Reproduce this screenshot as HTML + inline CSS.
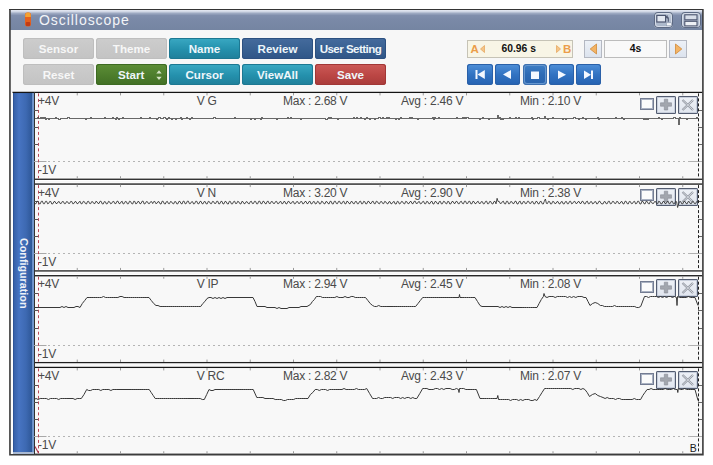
<!DOCTYPE html>
<html><head><meta charset="utf-8"><style>
*{margin:0;padding:0;box-sizing:border-box}
html,body{width:713px;height:465px;overflow:hidden;background:#fff;font-family:"Liberation Sans",sans-serif}
.abs{position:absolute;left:0;top:0}
.title{position:absolute;left:10px;top:10px;width:692.5px;height:19.5px;background:linear-gradient(#e6eaf3 0px,#d2d8e6 1.5px,#9ca8c1 3.5px,#808eac 5.5px,#7a89a7 10px,#7585a2 19.5px)}
.title span{position:absolute;left:29px;top:1.5px;font-size:14px;color:#f2f4f8;letter-spacing:0.95px}
.b{position:absolute;width:71px;height:21px;border-radius:3px;font-weight:bold;font-size:11.6px;text-align:center;line-height:21px;color:#eef6fa}
.gray{background:linear-gradient(#cdcdcd,#c3c3c3);color:#f7f7f7;box-shadow:inset 0 0 0 1px #bebebe}
.teal{background:linear-gradient(#3aa9c3,#2490ac 55%,#1f7f9a);box-shadow:inset 0 0 0 1px #1d7892}
.navy{background:linear-gradient(#456b9d,#386091 55%,#2f5587);box-shadow:inset 0 0 0 1px #2d5080}
.green{background:linear-gradient(#5d8e37,#4d7d2c 55%,#416f24);box-shadow:inset 0 0 0 1px #3d6a22}
.red{background:linear-gradient(#cc5a57,#bb4644 55%,#a93b3a);box-shadow:inset 0 0 0 1px #a13736}
.pb{position:absolute;top:63.5px;width:25.5px;height:21.3px;border-radius:3px;background:linear-gradient(#4f8fd8,#3273c2 50%,#2562b2);box-shadow:inset 0 0 0 1px #2a60a8}
.pb svg{position:absolute;left:0;top:0}
.abox{position:absolute;top:39.5px;width:18.5px;height:18px;background:linear-gradient(#edf1f7,#dce3ee);border:1px solid #b4b8c2}
.side{position:absolute;left:12.5px;top:92px;width:21px;height:361.5px;border-bottom:2px solid #a9b9d3;background:linear-gradient(90deg,#264a8a 0px,#3862aa 1.2px,#4774c2 6px,#3d69b2 13px,#2f5899 18.6px,#6a90c8 19.4px,#7a9cd0 21px);}
.side span{position:absolute;left:2px;top:146px;width:72px;font-weight:bold;font-size:10.75px;color:#eef2f8;transform-origin:0 0;transform:translate(15px,0) rotate(90deg);white-space:nowrap}
.lbl{position:absolute;font-size:12px;color:#4a4a4a;letter-spacing:-0.25px;white-space:nowrap;line-height:14px}
.chk{position:absolute;left:640.3px;width:13.3px;height:12px;border:1px solid #737c92;box-shadow:inset 0 0 0 1px #aab2c2;background:#fbfbfb}
.pbtn{position:absolute;width:20px;height:18px;border-radius:1.5px;background:linear-gradient(#eef1f7,#e0e5ee);box-shadow:inset 0 0 0 1px #535c70,inset 0 0 0 2px #c8cfdc}
.pbtn svg{position:absolute;left:0;top:0}
</style></head><body>
<div style="position:absolute;left:9px;top:9px;width:695px;height:447px;background:#f7f7f7"></div>
<div style="position:absolute;left:10.5px;top:92px;width:2.5px;height:362px;background:#fdfdfd"></div>
<div class="title"><span>Oscilloscope</span>
<svg style="position:absolute;left:14px;top:1px" width="8" height="17"><rect x="1" y="1.5" width="6" height="14" rx="2.2" fill="#e4601e"/><path d="M1.2 4.5Q1.2 1.5 4 1.5Q6.8 1.5 6.8 4.5V6H1.2Z" fill="#f3a233"/><rect x="1.8" y="11" width="4.4" height="4" rx="1" fill="#c03c16"/></svg>
<div style="position:absolute;left:643.5px;top:1.5px;width:19.5px;height:16px;border-radius:4px;background:linear-gradient(#c2ccdb,#a7b3c7);box-shadow:inset 0 0 0 1px #5d6a84,inset 0 0 0 2px #d6dce8"></div>
<svg style="position:absolute;left:643.5px;top:1.5px" width="20" height="16"><rect x="2.8" y="3.4" width="8.8" height="6.6" fill="#e2e7f0" stroke="#4d5670" stroke-width="1.2"/><path d="M14.3 9.8V6.3Q14.3 5 13 5H12.4M13.6 3.6L12.2 5L13.6 6.4" fill="none" stroke="#4d5670" stroke-width="1.1"/><rect x="12.3" y="10.8" width="5" height="3" fill="#f4f6fa" stroke="#8a96ab" stroke-width="0.6"/></svg>
<div style="position:absolute;left:670.5px;top:1.5px;width:20px;height:16px;border-radius:4px;background:linear-gradient(#c2ccdb,#a7b3c7);box-shadow:inset 0 0 0 1px #5d6a84,inset 0 0 0 2px #d6dce8"></div>
<svg style="position:absolute;left:670.5px;top:1.5px" width="20" height="16"><rect x="3.8" y="2.8" width="12.2" height="5" fill="#d8dee9" stroke="#4d5670" stroke-width="1.1"/><rect x="3.8" y="9.3" width="12.2" height="4.6" fill="#eef1f6" stroke="#4d5670" stroke-width="1.1"/></svg>
</div>
<div class="b gray" style="left:23px;top:38px">Sensor</div>
<div class="b gray" style="left:96px;top:38px">Theme</div>
<div class="b teal" style="left:169px;top:38px">Name</div>
<div class="b navy" style="left:242px;top:38px">Review</div>
<div class="b navy" style="left:315px;top:38px;letter-spacing:-0.55px">User Setting</div>
<div class="b gray" style="left:23px;top:63.5px">Reset</div>
<div class="b green" style="left:96px;top:63.5px"><span style="position:absolute;left:22px">Start</span><svg style="position:absolute;left:59px;top:5.5px" width="8" height="12"><path d="M1.3 4.6L4 1.2L6.7 4.6ZM1.3 7.7L4 11.1L6.7 7.7Z" fill="#d3e2c4"/></svg></div>
<div class="b teal" style="left:169px;top:63.5px">Cursor</div>
<div class="b teal" style="left:242px;top:63.5px">ViewAll</div>
<div class="b red" style="left:315px;top:63.5px">Save</div>

<div style="position:absolute;left:467px;top:39.5px;width:106px;height:18px;background:#f8f5e6;border:1px solid #c6c3b6"></div>
<svg style="position:absolute;left:467px;top:39.5px" width="106" height="18"><text x="3.5" y="13.2" font-family="Liberation Sans" font-weight="bold" font-size="11.5" fill="#eb9d4a">A</text><path d="M13.5 9L17.5 5.5V12.5Z" fill="#f5c488" stroke="#e4a258" stroke-width="0.7"/><path d="M89.5 5.5L93.5 9L89.5 12.5Z" fill="#f5c488" stroke="#e4a258" stroke-width="0.7"/><text x="96" y="13.2" font-family="Liberation Sans" font-weight="bold" font-size="11.5" fill="#eb9d4a">B</text></svg>
<div style="position:absolute;left:501.5px;top:43.2px;font-weight:bold;font-size:10.3px;color:#111;white-space:nowrap">60.96 s</div>
<div class="abox" style="left:583.5px"><svg width="18" height="18" style="position:absolute;left:-1px;top:-1px"><path d="M6.2 9L12.5 4V14Z" fill="#f3b466" stroke="#d08a3a" stroke-width="0.8"/></svg></div>
<div style="position:absolute;left:604px;top:39.5px;width:63px;height:18px;background:#f9f9f9;border:1px solid #bcbcbc;font-weight:bold;font-size:10.4px;text-align:center;line-height:15.5px;color:#111">4s</div>
<div class="abox" style="left:668.5px"><svg width="18" height="18" style="position:absolute;left:-1px;top:-1px"><path d="M6.5 4L12.8 9L6.5 14Z" fill="#f3b466" stroke="#d08a3a" stroke-width="0.8"/></svg></div>

<div class="pb" style="left:467px"><svg width="26" height="22"><rect x="8.5" y="6" width="2" height="9" fill="#f4f8ff"/><path d="M10.5 10.5L17.8 6V15Z" fill="#f4f8ff"/></svg></div>
<div class="pb" style="left:494.5px"><svg width="26" height="22"><path d="M8 10.5L16 6V15Z" fill="#f4f8ff"/></svg></div>
<div class="pb" style="left:522.5px;width:24.5px;border-radius:4px;background:linear-gradient(#3f7fc6,#2e6bb5 50%,#2862ac);box-shadow:inset 0 0 0 1px #3d6fae,inset 0 0 0 2px #6597d0"><svg width="26" height="22"><rect x="8" y="7.5" width="8" height="7.5" fill="#f4f8ff"/></svg></div>
<div class="pb" style="left:548.5px"><svg width="26" height="22"><path d="M9 6.5L17 10.75L9 15Z" fill="#f4f8ff"/></svg></div>
<div class="pb" style="left:576px;width:25px"><svg width="26" height="22"><path d="M8 6.5L15 10.75L8 15Z" fill="#f4f8ff"/><rect x="15" y="6.5" width="2" height="8.5" fill="#f4f8ff"/></svg></div>

<div class="side"><span>Configuration</span></div>
<svg class="abs" width="713" height="465">
<rect x="34" y="92.40" width="668.5" height="86.85" fill="#f8f8f8"/>
<rect x="34" y="184.07" width="668.5" height="86.85" fill="#f8f8f8"/>
<rect x="34" y="275.74" width="668.5" height="86.85" fill="#f8f8f8"/>
<rect x="34" y="367.41" width="668.5" height="86.85" fill="#f8f8f8"/>
<rect x="34" y="90.80" width="668.5" height="3.2" fill="#ffffff"/>
<rect x="34" y="177.65" width="668.5" height="3.2" fill="#ffffff"/>
<rect x="12.5" y="91.75" width="690.0" height="1.3" fill="#141414"/>
<rect x="34" y="178.60" width="668.5" height="1.3" fill="#1e1e1e"/>
<rect x="34" y="182.47" width="668.5" height="3.2" fill="#ffffff"/>
<rect x="34" y="269.32" width="668.5" height="3.2" fill="#ffffff"/>
<rect x="34" y="183.42" width="668.5" height="1.3" fill="#141414"/>
<rect x="34" y="270.27" width="668.5" height="1.3" fill="#1e1e1e"/>
<rect x="34" y="274.14" width="668.5" height="3.2" fill="#ffffff"/>
<rect x="34" y="360.99" width="668.5" height="3.2" fill="#ffffff"/>
<rect x="34" y="275.09" width="668.5" height="1.3" fill="#141414"/>
<rect x="34" y="361.94" width="668.5" height="1.3" fill="#1e1e1e"/>
<rect x="34" y="365.81" width="668.5" height="3.2" fill="#ffffff"/>
<rect x="34" y="452.66" width="668.5" height="3.2" fill="#ffffff"/>
<rect x="34" y="366.76" width="668.5" height="1.3" fill="#141414"/>
<rect x="34" y="453.61" width="668.5" height="1.3" fill="#1e1e1e"/>
</svg>

<div class="lbl" style="left:38px;top:94.10px">+4V</div>
<div class="lbl" style="left:38px;top:163.40px">-1V</div>
<div class="lbl" style="left:196.7px;top:93.90px">V G</div>
<div class="lbl" style="left:283px;top:93.90px">Max : 2.68 V</div>
<div class="lbl" style="left:401px;top:93.90px">Avg : 2.46 V</div>
<div class="lbl" style="left:520px;top:93.90px">Min : 2.10 V</div>
<div class="chk" style="top:97.60px"></div>
<div class="pbtn" style="left:656px;top:96.00px"><svg width="20" height="18"><path d="M8.3 3.2h3.4v3.6h3.8v3.4h-3.8v3.8h-3.4v-3.8h-3.8v-3.4h3.8z" fill="#a2a6ae" stroke="#888c96" stroke-width="0.6"/></svg></div>
<div class="pbtn" style="left:677.5px;top:96.00px"><svg width="20" height="18"><path d="M4.5 4L15 14M15 4L4.5 14" stroke="#8f949e" stroke-width="2.2"/><path d="M4.5 4L15 14M15 4L4.5 14" stroke="#e4e8ef" stroke-width="0.8"/></svg></div>

<div class="lbl" style="left:38px;top:185.77px">+4V</div>
<div class="lbl" style="left:38px;top:255.07px">-1V</div>
<div class="lbl" style="left:196.7px;top:185.57px">V N</div>
<div class="lbl" style="left:283px;top:185.57px">Max : 3.20 V</div>
<div class="lbl" style="left:401px;top:185.57px">Avg : 2.90 V</div>
<div class="lbl" style="left:520px;top:185.57px">Min : 2.38 V</div>
<div class="chk" style="top:189.27px"></div>
<div class="pbtn" style="left:656px;top:187.67px"><svg width="20" height="18"><path d="M8.3 3.2h3.4v3.6h3.8v3.4h-3.8v3.8h-3.4v-3.8h-3.8v-3.4h3.8z" fill="#a2a6ae" stroke="#888c96" stroke-width="0.6"/></svg></div>
<div class="pbtn" style="left:677.5px;top:187.67px"><svg width="20" height="18"><path d="M4.5 4L15 14M15 4L4.5 14" stroke="#8f949e" stroke-width="2.2"/><path d="M4.5 4L15 14M15 4L4.5 14" stroke="#e4e8ef" stroke-width="0.8"/></svg></div>

<div class="lbl" style="left:38px;top:277.44px">+4V</div>
<div class="lbl" style="left:38px;top:346.74px">-1V</div>
<div class="lbl" style="left:196.7px;top:277.24px">V IP</div>
<div class="lbl" style="left:283px;top:277.24px">Max : 2.94 V</div>
<div class="lbl" style="left:401px;top:277.24px">Avg : 2.45 V</div>
<div class="lbl" style="left:520px;top:277.24px">Min : 2.08 V</div>
<div class="chk" style="top:280.94px"></div>
<div class="pbtn" style="left:656px;top:279.34px"><svg width="20" height="18"><path d="M8.3 3.2h3.4v3.6h3.8v3.4h-3.8v3.8h-3.4v-3.8h-3.8v-3.4h3.8z" fill="#a2a6ae" stroke="#888c96" stroke-width="0.6"/></svg></div>
<div class="pbtn" style="left:677.5px;top:279.34px"><svg width="20" height="18"><path d="M4.5 4L15 14M15 4L4.5 14" stroke="#8f949e" stroke-width="2.2"/><path d="M4.5 4L15 14M15 4L4.5 14" stroke="#e4e8ef" stroke-width="0.8"/></svg></div>

<div class="lbl" style="left:38px;top:369.11px">+4V</div>
<div class="lbl" style="left:38px;top:438.41px">-1V</div>
<div class="lbl" style="left:196.7px;top:368.91px">V RC</div>
<div class="lbl" style="left:283px;top:368.91px">Max : 2.82 V</div>
<div class="lbl" style="left:401px;top:368.91px">Avg : 2.43 V</div>
<div class="lbl" style="left:520px;top:368.91px">Min : 2.07 V</div>
<div class="chk" style="top:372.61px"></div>
<div class="pbtn" style="left:656px;top:371.01px"><svg width="20" height="18"><path d="M8.3 3.2h3.4v3.6h3.8v3.4h-3.8v3.8h-3.4v-3.8h-3.8v-3.4h3.8z" fill="#a2a6ae" stroke="#888c96" stroke-width="0.6"/></svg></div>
<div class="pbtn" style="left:677.5px;top:371.01px"><svg width="20" height="18"><path d="M4.5 4L15 14M15 4L4.5 14" stroke="#8f949e" stroke-width="2.2"/><path d="M4.5 4L15 14M15 4L4.5 14" stroke="#e4e8ef" stroke-width="0.8"/></svg></div>

<svg class="abs" width="713" height="465">
<line x1="34.5" y1="92" x2="34.5" y2="454.5" stroke="#303030"/>
<line x1="77.25" y1="93.00" x2="77.25" y2="95.40" stroke="#9a9a9a"/>
<line x1="77.25" y1="176.25" x2="77.25" y2="178.65" stroke="#9a9a9a"/>
<line x1="120.50" y1="93.00" x2="120.50" y2="95.40" stroke="#9a9a9a"/>
<line x1="120.50" y1="176.25" x2="120.50" y2="178.65" stroke="#9a9a9a"/>
<line x1="163.75" y1="93.00" x2="163.75" y2="95.40" stroke="#9a9a9a"/>
<line x1="163.75" y1="176.25" x2="163.75" y2="178.65" stroke="#9a9a9a"/>
<line x1="207.00" y1="93.00" x2="207.00" y2="95.40" stroke="#9a9a9a"/>
<line x1="207.00" y1="176.25" x2="207.00" y2="178.65" stroke="#9a9a9a"/>
<line x1="250.25" y1="93.00" x2="250.25" y2="95.40" stroke="#9a9a9a"/>
<line x1="250.25" y1="176.25" x2="250.25" y2="178.65" stroke="#9a9a9a"/>
<line x1="293.50" y1="93.00" x2="293.50" y2="95.40" stroke="#9a9a9a"/>
<line x1="293.50" y1="176.25" x2="293.50" y2="178.65" stroke="#9a9a9a"/>
<line x1="336.75" y1="93.00" x2="336.75" y2="95.40" stroke="#9a9a9a"/>
<line x1="336.75" y1="176.25" x2="336.75" y2="178.65" stroke="#9a9a9a"/>
<line x1="380.00" y1="93.00" x2="380.00" y2="95.40" stroke="#9a9a9a"/>
<line x1="380.00" y1="176.25" x2="380.00" y2="178.65" stroke="#9a9a9a"/>
<line x1="423.25" y1="93.00" x2="423.25" y2="95.40" stroke="#9a9a9a"/>
<line x1="423.25" y1="176.25" x2="423.25" y2="178.65" stroke="#9a9a9a"/>
<line x1="466.50" y1="93.00" x2="466.50" y2="95.40" stroke="#9a9a9a"/>
<line x1="466.50" y1="176.25" x2="466.50" y2="178.65" stroke="#9a9a9a"/>
<line x1="509.75" y1="93.00" x2="509.75" y2="95.40" stroke="#9a9a9a"/>
<line x1="509.75" y1="176.25" x2="509.75" y2="178.65" stroke="#9a9a9a"/>
<line x1="553.00" y1="93.00" x2="553.00" y2="95.40" stroke="#9a9a9a"/>
<line x1="553.00" y1="176.25" x2="553.00" y2="178.65" stroke="#9a9a9a"/>
<line x1="596.25" y1="93.00" x2="596.25" y2="95.40" stroke="#9a9a9a"/>
<line x1="596.25" y1="176.25" x2="596.25" y2="178.65" stroke="#9a9a9a"/>
<line x1="639.50" y1="93.00" x2="639.50" y2="95.40" stroke="#9a9a9a"/>
<line x1="639.50" y1="176.25" x2="639.50" y2="178.65" stroke="#9a9a9a"/>
<line x1="682.75" y1="93.00" x2="682.75" y2="95.40" stroke="#9a9a9a"/>
<line x1="682.75" y1="176.25" x2="682.75" y2="178.65" stroke="#9a9a9a"/>
<line x1="34" y1="110.5" x2="38.5" y2="110.5" stroke="#555"/>
<line x1="698" y1="110.5" x2="702" y2="110.5" stroke="#666"/>
<line x1="34" y1="127.5" x2="38.5" y2="127.5" stroke="#555"/>
<line x1="698" y1="127.5" x2="702" y2="127.5" stroke="#666"/>
<line x1="34" y1="144.5" x2="38.5" y2="144.5" stroke="#555"/>
<line x1="698" y1="144.5" x2="702" y2="144.5" stroke="#666"/>
<line x1="34" y1="161.5" x2="46.5" y2="161.5" stroke="#a8a8a8"/>
<line x1="48" y1="161.5" x2="690" y2="161.5" stroke="#b4b4b4" stroke-dasharray="2,3"/>
<line x1="690" y1="161.5" x2="702" y2="161.5" stroke="#b0b0b0"/>
<line x1="38.5" y1="93.4" x2="38.5" y2="178.2" stroke="#b8485a" stroke-dasharray="3,2.5"/>
<line x1="698.5" y1="93.4" x2="698.5" y2="178.2" stroke="#222" stroke-dasharray="3,2"/>
<path d="M34.0,118.5 L35.0,118.5 L35.0,118.5 L36.0,118.5 L36.0,118.5 L37.0,118.5 L37.0,117.5 L38.0,117.5 L38.0,118.5 L39.0,118.5 L39.0,118.5 L40.0,118.5 L40.0,117.5 L41.0,117.5 L41.0,118.5 L42.0,118.5 L42.0,117.5 L43.0,117.5 L43.0,118.5 L44.0,118.5 L44.0,117.5 L45.0,117.5 L45.0,119.5 L46.0,119.5 L46.0,118.5 L47.0,118.5 L47.0,118.5 L48.0,118.5 L48.0,119.5 L49.0,119.5 L49.0,118.5 L50.0,118.5 L50.0,118.5 L51.0,118.5 L51.0,118.5 L52.0,118.5 L52.0,118.5 L53.0,118.5 L53.0,118.5 L54.0,118.5 L54.0,118.5 L55.0,118.5 L55.0,117.5 L56.0,117.5 L56.0,118.5 L57.0,118.5 L57.0,118.5 L58.0,118.5 L58.0,119.5 L59.0,119.5 L59.0,119.5 L60.0,119.5 L60.0,118.5 L61.0,118.5 L61.0,118.5 L62.0,118.5 L62.0,118.5 L63.0,118.5 L63.0,118.5 L64.0,118.5 L64.0,118.5 L65.0,118.5 L65.0,118.5 L66.0,118.5 L66.0,118.5 L67.0,118.5 L67.0,117.5 L68.0,117.5 L68.0,117.5 L69.0,117.5 L69.0,118.5 L70.0,118.5 L70.0,118.5 L71.0,118.5 L71.0,118.5 L72.0,118.5 L72.0,118.5 L73.0,118.5 L73.0,118.5 L74.0,118.5 L74.0,118.5 L75.0,118.5 L75.0,118.5 L76.0,118.5 L76.0,118.5 L77.0,118.5 L77.0,118.5 L78.0,118.5 L78.0,118.5 L79.0,118.5 L79.0,118.5 L80.0,118.5 L80.0,118.5 L81.0,118.5 L81.0,118.5 L82.0,118.5 L82.0,118.5 L83.0,118.5 L83.0,118.5 L84.0,118.5 L84.0,118.5 L85.0,118.5 L85.0,119.5 L86.0,119.5 L86.0,118.5 L87.0,118.5 L87.0,118.5 L88.0,118.5 L88.0,118.5 L89.0,118.5 L89.0,118.5 L90.0,118.5 L90.0,117.5 L91.0,117.5 L91.0,118.5 L92.0,118.5 L92.0,118.5 L93.0,118.5 L93.0,118.5 L94.0,118.5 L94.0,118.5 L95.0,118.5 L95.0,118.5 L96.0,118.5 L96.0,118.5 L97.0,118.5 L97.0,118.5 L98.0,118.5 L98.0,118.5 L99.0,118.5 L99.0,118.5 L100.0,118.5 L100.0,118.5 L101.0,118.5 L101.0,118.5 L102.0,118.5 L102.0,118.5 L103.0,118.5 L103.0,118.5 L104.0,118.5 L104.0,117.5 L105.0,117.5 L105.0,118.5 L106.0,118.5 L106.0,118.5 L107.0,118.5 L107.0,118.5 L108.0,118.5 L108.0,118.5 L109.0,118.5 L109.0,118.5 L110.0,118.5 L110.0,118.5 L111.0,118.5 L111.0,118.5 L112.0,118.5 L112.0,117.5 L113.0,117.5 L113.0,118.5 L114.0,118.5 L114.0,118.5 L115.0,118.5 L115.0,119.5 L116.0,119.5 L116.0,117.5 L117.0,117.5 L117.0,118.5 L118.0,118.5 L118.0,119.5 L119.0,119.5 L119.0,118.5 L120.0,118.5 L120.0,118.5 L121.0,118.5 L121.0,118.5 L122.0,118.5 L122.0,117.5 L123.0,117.5 L123.0,118.5 L124.0,118.5 L124.0,118.5 L125.0,118.5 L125.0,118.5 L126.0,118.5 L126.0,118.5 L127.0,118.5 L127.0,118.5 L128.0,118.5 L128.0,118.5 L129.0,118.5 L129.0,118.5 L130.0,118.5 L130.0,118.5 L131.0,118.5 L131.0,118.5 L132.0,118.5 L132.0,118.5 L133.0,118.5 L133.0,118.5 L134.0,118.5 L134.0,118.5 L135.0,118.5 L135.0,118.5 L136.0,118.5 L136.0,118.5 L137.0,118.5 L137.0,118.5 L138.0,118.5 L138.0,118.5 L139.0,118.5 L139.0,118.5 L140.0,118.5 L140.0,117.5 L141.0,117.5 L141.0,118.5 L142.0,118.5 L142.0,118.5 L143.0,118.5 L143.0,118.5 L144.0,118.5 L144.0,118.5 L145.0,118.5 L145.0,118.5 L146.0,118.5 L146.0,118.5 L147.0,118.5 L147.0,118.5 L148.0,118.5 L148.0,118.5 L149.0,118.5 L149.0,117.5 L150.0,117.5 L150.0,118.5 L151.0,118.5 L151.0,118.5 L152.0,118.5 L152.0,118.5 L153.0,118.5 L153.0,118.5 L154.0,118.5 L154.0,118.5 L155.0,118.5 L155.0,118.5 L156.0,118.5 L156.0,119.5 L157.0,119.5 L157.0,118.5 L158.0,118.5 L158.0,117.5 L159.0,117.5 L159.0,117.5 L160.0,117.5 L160.0,118.5 L161.0,118.5 L161.0,118.5 L162.0,118.5 L162.0,118.5 L163.0,118.5 L163.0,117.5 L164.0,117.5 L164.0,117.5 L165.0,117.5 L165.0,118.5 L166.0,118.5 L166.0,119.5 L167.0,119.5 L167.0,118.5 L168.0,118.5 L168.0,117.5 L169.0,117.5 L169.0,118.5 L170.0,118.5 L170.0,118.5 L171.0,118.5 L171.0,119.5 L172.0,119.5 L172.0,118.5 L173.0,118.5 L173.0,118.5 L174.0,118.5 L174.0,118.5 L175.0,118.5 L175.0,119.5 L176.0,119.5 L176.0,118.5 L177.0,118.5 L177.0,118.5 L178.0,118.5 L178.0,118.5 L179.0,118.5 L179.0,118.5 L180.0,118.5 L180.0,117.5 L181.0,117.5 L181.0,119.5 L182.0,119.5 L182.0,118.5 L183.0,118.5 L183.0,118.5 L184.0,118.5 L184.0,118.5 L185.0,118.5 L185.0,118.5 L186.0,118.5 L186.0,117.5 L187.0,117.5 L187.0,118.5 L188.0,118.5 L188.0,118.5 L189.0,118.5 L189.0,119.5 L190.0,119.5 L190.0,118.5 L191.0,118.5 L191.0,117.5 L192.0,117.5 L192.0,118.5 L193.0,118.5 L193.0,118.5 L194.0,118.5 L194.0,118.5 L195.0,118.5 L195.0,118.5 L196.0,118.5 L196.0,118.5 L197.0,118.5 L197.0,118.5 L198.0,118.5 L198.0,118.5 L199.0,118.5 L199.0,118.5 L200.0,118.5 L200.0,118.5 L201.0,118.5 L201.0,118.5 L202.0,118.5 L202.0,118.5 L203.0,118.5 L203.0,118.5 L204.0,118.5 L204.0,118.5 L205.0,118.5 L205.0,118.5 L206.0,118.5 L206.0,118.5 L207.0,118.5 L207.0,118.5 L208.0,118.5 L208.0,118.5 L209.0,118.5 L209.0,118.5 L210.0,118.5 L210.0,118.5 L211.0,118.5 L211.0,118.5 L212.0,118.5 L212.0,118.5 L213.0,118.5 L213.0,117.5 L214.0,117.5 L214.0,117.5 L215.0,117.5 L215.0,118.5 L216.0,118.5 L216.0,118.5 L217.0,118.5 L217.0,118.5 L218.0,118.5 L218.0,118.5 L219.0,118.5 L219.0,118.5 L220.0,118.5 L220.0,118.5 L221.0,118.5 L221.0,118.5 L222.0,118.5 L222.0,118.5 L223.0,118.5 L223.0,118.5 L224.0,118.5 L224.0,118.5 L225.0,118.5 L225.0,118.5 L226.0,118.5 L226.0,118.5 L227.0,118.5 L227.0,118.5 L228.0,118.5 L228.0,118.5 L229.0,118.5 L229.0,118.5 L230.0,118.5 L230.0,118.5 L231.0,118.5 L231.0,118.5 L232.0,118.5 L232.0,118.5 L233.0,118.5 L233.0,118.5 L234.0,118.5 L234.0,117.5 L235.0,117.5 L235.0,118.5 L236.0,118.5 L236.0,118.5 L237.0,118.5 L237.0,118.5 L238.0,118.5 L238.0,118.5 L239.0,118.5 L239.0,118.5 L240.0,118.5 L240.0,118.5 L241.0,118.5 L241.0,118.5 L242.0,118.5 L242.0,118.5 L243.0,118.5 L243.0,118.5 L244.0,118.5 L244.0,118.5 L245.0,118.5 L245.0,118.5 L246.0,118.5 L246.0,118.5 L247.0,118.5 L247.0,118.5 L248.0,118.5 L248.0,118.5 L249.0,118.5 L249.0,118.5 L250.0,118.5 L250.0,119.5 L251.0,119.5 L251.0,118.5 L252.0,118.5 L252.0,118.5 L253.0,118.5 L253.0,118.5 L254.0,118.5 L254.0,119.5 L255.0,119.5 L255.0,118.5 L256.0,118.5 L256.0,118.5 L257.0,118.5 L257.0,118.5 L258.0,118.5 L258.0,118.5 L259.0,118.5 L259.0,118.5 L260.0,118.5 L260.0,119.5 L261.0,119.5 L261.0,117.5 L262.0,117.5 L262.0,118.5 L263.0,118.5 L263.0,118.5 L264.0,118.5 L264.0,118.5 L265.0,118.5 L265.0,118.5 L266.0,118.5 L266.0,118.5 L267.0,118.5 L267.0,118.5 L268.0,118.5 L268.0,118.5 L269.0,118.5 L269.0,118.5 L270.0,118.5 L270.0,118.5 L271.0,118.5 L271.0,118.5 L272.0,118.5 L272.0,118.5 L273.0,118.5 L273.0,118.5 L274.0,118.5 L274.0,118.5 L275.0,118.5 L275.0,118.5 L276.0,118.5 L276.0,119.5 L277.0,119.5 L277.0,118.5 L278.0,118.5 L278.0,118.5 L279.0,118.5 L279.0,118.5 L280.0,118.5 L280.0,118.5 L281.0,118.5 L281.0,118.5 L282.0,118.5 L282.0,118.5 L283.0,118.5 L283.0,118.5 L284.0,118.5 L284.0,118.5 L285.0,118.5 L285.0,118.5 L286.0,118.5 L286.0,118.5 L287.0,118.5 L287.0,117.5 L288.0,117.5 L288.0,118.5 L289.0,118.5 L289.0,118.5 L290.0,118.5 L290.0,117.5 L291.0,117.5 L291.0,118.5 L292.0,118.5 L292.0,118.5 L293.0,118.5 L293.0,118.5 L294.0,118.5 L294.0,118.5 L295.0,118.5 L295.0,118.5 L296.0,118.5 L296.0,118.5 L297.0,118.5 L297.0,118.5 L298.0,118.5 L298.0,118.5 L299.0,118.5 L299.0,118.5 L300.0,118.5 L300.0,119.5 L301.0,119.5 L301.0,118.5 L302.0,118.5 L302.0,118.5 L303.0,118.5 L303.0,118.5 L304.0,118.5 L304.0,118.5 L305.0,118.5 L305.0,118.5 L306.0,118.5 L306.0,118.5 L307.0,118.5 L307.0,118.5 L308.0,118.5 L308.0,118.5 L309.0,118.5 L309.0,118.5 L310.0,118.5 L310.0,118.5 L311.0,118.5 L311.0,118.5 L312.0,118.5 L312.0,118.5 L313.0,118.5 L313.0,118.5 L314.0,118.5 L314.0,118.5 L315.0,118.5 L315.0,118.5 L316.0,118.5 L316.0,118.5 L317.0,118.5 L317.0,118.5 L318.0,118.5 L318.0,118.5 L319.0,118.5 L319.0,118.5 L320.0,118.5 L320.0,118.5 L321.0,118.5 L321.0,118.5 L322.0,118.5 L322.0,118.5 L323.0,118.5 L323.0,118.5 L324.0,118.5 L324.0,118.5 L325.0,118.5 L325.0,119.5 L326.0,119.5 L326.0,119.5 L327.0,119.5 L327.0,118.5 L328.0,118.5 L328.0,117.5 L329.0,117.5 L329.0,118.5 L330.0,118.5 L330.0,117.5 L331.0,117.5 L331.0,118.5 L332.0,118.5 L332.0,118.5 L333.0,118.5 L333.0,118.5 L334.0,118.5 L334.0,118.5 L335.0,118.5 L335.0,118.5 L336.0,118.5 L336.0,118.5 L337.0,118.5 L337.0,119.5 L338.0,119.5 L338.0,118.5 L339.0,118.5 L339.0,118.5 L340.0,118.5 L340.0,118.5 L341.0,118.5 L341.0,118.5 L342.0,118.5 L342.0,118.5 L343.0,118.5 L343.0,118.5 L344.0,118.5 L344.0,118.5 L345.0,118.5 L345.0,118.5 L346.0,118.5 L346.0,118.5 L347.0,118.5 L347.0,118.5 L348.0,118.5 L348.0,118.5 L349.0,118.5 L349.0,118.5 L350.0,118.5 L350.0,118.5 L351.0,118.5 L351.0,118.5 L352.0,118.5 L352.0,118.5 L353.0,118.5 L353.0,117.5 L354.0,117.5 L354.0,118.5 L355.0,118.5 L355.0,118.5 L356.0,118.5 L356.0,117.5 L357.0,117.5 L357.0,118.5 L358.0,118.5 L358.0,118.5 L359.0,118.5 L359.0,118.5 L360.0,118.5 L360.0,117.5 L361.0,117.5 L361.0,118.5 L362.0,118.5 L362.0,118.5 L363.0,118.5 L363.0,118.5 L364.0,118.5 L364.0,119.5 L365.0,119.5 L365.0,118.5 L366.0,118.5 L366.0,117.5 L367.0,117.5 L367.0,118.5 L368.0,118.5 L368.0,118.5 L369.0,118.5 L369.0,119.5 L370.0,119.5 L370.0,118.5 L371.0,118.5 L371.0,118.5 L372.0,118.5 L372.0,118.5 L373.0,118.5 L373.0,118.5 L374.0,118.5 L374.0,119.5 L375.0,119.5 L375.0,118.5 L376.0,118.5 L376.0,118.5 L377.0,118.5 L377.0,118.5 L378.0,118.5 L378.0,117.5 L379.0,117.5 L379.0,117.5 L380.0,117.5 L380.0,118.5 L381.0,118.5 L381.0,118.5 L382.0,118.5 L382.0,117.5 L383.0,117.5 L383.0,118.5 L384.0,118.5 L384.0,118.5 L385.0,118.5 L385.0,118.5 L386.0,118.5 L386.0,117.5 L387.0,117.5 L387.0,118.5 L388.0,118.5 L388.0,117.5 L389.0,117.5 L389.0,118.5 L390.0,118.5 L390.0,118.5 L391.0,118.5 L391.0,118.5 L392.0,118.5 L392.0,118.5 L393.0,118.5 L393.0,118.5 L394.0,118.5 L394.0,118.5 L395.0,118.5 L395.0,119.5 L396.0,119.5 L396.0,118.5 L397.0,118.5 L397.0,118.5 L398.0,118.5 L398.0,119.5 L399.0,119.5 L399.0,118.5 L400.0,118.5 L400.0,117.5 L401.0,117.5 L401.0,118.5 L402.0,118.5 L402.0,118.5 L403.0,118.5 L403.0,118.5 L404.0,118.5 L404.0,118.5 L405.0,118.5 L405.0,118.5 L406.0,118.5 L406.0,118.5 L407.0,118.5 L407.0,118.5 L408.0,118.5 L408.0,118.5 L409.0,118.5 L409.0,117.5 L410.0,117.5 L410.0,118.5 L411.0,118.5 L411.0,117.5 L412.0,117.5 L412.0,118.5 L413.0,118.5 L413.0,118.5 L414.0,118.5 L414.0,118.5 L415.0,118.5 L415.0,118.5 L416.0,118.5 L416.0,118.5 L417.0,118.5 L417.0,119.5 L418.0,119.5 L418.0,118.5 L419.0,118.5 L419.0,118.5 L420.0,118.5 L420.0,118.5 L421.0,118.5 L421.0,118.5 L422.0,118.5 L422.0,118.5 L423.0,118.5 L423.0,118.5 L424.0,118.5 L424.0,118.5 L425.0,118.5 L425.0,118.5 L426.0,118.5 L426.0,118.5 L427.0,118.5 L427.0,118.5 L428.0,118.5 L428.0,118.5 L429.0,118.5 L429.0,118.5 L430.0,118.5 L430.0,118.5 L431.0,118.5 L431.0,118.5 L432.0,118.5 L432.0,117.5 L433.0,117.5 L433.0,119.5 L434.0,119.5 L434.0,117.5 L435.0,117.5 L435.0,118.5 L436.0,118.5 L436.0,118.5 L437.0,118.5 L437.0,118.5 L438.0,118.5 L438.0,117.5 L439.0,117.5 L439.0,118.5 L440.0,118.5 L440.0,118.5 L441.0,118.5 L441.0,118.5 L442.0,118.5 L442.0,118.5 L443.0,118.5 L443.0,118.5 L444.0,118.5 L444.0,118.5 L445.0,118.5 L445.0,118.5 L446.0,118.5 L446.0,118.5 L447.0,118.5 L447.0,118.5 L448.0,118.5 L448.0,118.5 L449.0,118.5 L449.0,118.5 L450.0,118.5 L450.0,118.5 L451.0,118.5 L451.0,118.5 L452.0,118.5 L452.0,118.5 L453.0,118.5 L453.0,118.5 L454.0,118.5 L454.0,118.5 L455.0,118.5 L455.0,118.5 L456.0,118.5 L456.0,117.5 L457.0,117.5 L457.0,118.5 L458.0,118.5 L458.0,118.5 L459.0,118.5 L459.0,118.5 L460.0,118.5 L460.0,118.5 L461.0,118.5 L461.0,118.5 L462.0,118.5 L462.0,117.5 L463.0,117.5 L463.0,118.5 L464.0,118.5 L464.0,117.5 L465.0,117.5 L465.0,118.5 L466.0,118.5 L466.0,117.5 L467.0,117.5 L467.0,117.5 L468.0,117.5 L468.0,118.5 L469.0,118.5 L469.0,118.5 L470.0,118.5 L470.0,118.5 L471.0,118.5 L471.0,118.5 L472.0,118.5 L472.0,118.5 L473.0,118.5 L473.0,118.5 L474.0,118.5 L474.0,118.5 L475.0,118.5 L475.0,118.5 L476.0,118.5 L476.0,118.5 L477.0,118.5 L477.0,118.5 L478.0,118.5 L478.0,118.5 L479.0,118.5 L479.0,119.5 L480.0,119.5 L480.0,118.5 L481.0,118.5 L481.0,118.5 L482.0,118.5 L482.0,117.5 L483.0,117.5 L483.0,118.5 L484.0,118.5 L484.0,118.5 L485.0,118.5 L485.0,118.5 L486.0,118.5 L486.0,118.5 L487.0,118.5 L487.0,118.5 L488.0,118.5 L488.0,119.5 L489.0,119.5 L489.0,118.5 L490.0,118.5 L490.0,118.5 L491.0,118.5 L491.0,118.5 L492.0,118.5 L492.0,118.5 L493.0,118.5 L493.0,118.5 L494.0,118.5 L494.0,118.5 L495.0,118.5 L495.0,118.5 L496.0,118.5 L496.0,118.5 L497.0,118.5 L497.0,115.5 L498.0,115.5 L498.0,118.5 L499.0,118.5 L499.0,117.5 L500.0,117.5 L500.0,119.5 L501.0,119.5 L501.0,118.5 L502.0,118.5 L502.0,119.5 L503.0,119.5 L503.0,118.5 L504.0,118.5 L504.0,118.5 L505.0,118.5 L505.0,118.5 L506.0,118.5 L506.0,118.5 L507.0,118.5 L507.0,118.5 L508.0,118.5 L508.0,118.5 L509.0,118.5 L509.0,117.5 L510.0,117.5 L510.0,118.5 L511.0,118.5 L511.0,118.5 L512.0,118.5 L512.0,118.5 L513.0,118.5 L513.0,118.5 L514.0,118.5 L514.0,118.5 L515.0,118.5 L515.0,117.5 L516.0,117.5 L516.0,118.5 L517.0,118.5 L517.0,118.5 L518.0,118.5 L518.0,117.5 L519.0,117.5 L519.0,118.5 L520.0,118.5 L520.0,118.5 L521.0,118.5 L521.0,118.5 L522.0,118.5 L522.0,118.5 L523.0,118.5 L523.0,118.5 L524.0,118.5 L524.0,118.5 L525.0,118.5 L525.0,118.5 L526.0,118.5 L526.0,118.5 L527.0,118.5 L527.0,118.5 L528.0,118.5 L528.0,118.5 L529.0,118.5 L529.0,118.5 L530.0,118.5 L530.0,118.5 L531.0,118.5 L531.0,117.5 L532.0,117.5 L532.0,119.5 L533.0,119.5 L533.0,118.5 L534.0,118.5 L534.0,118.5 L535.0,118.5 L535.0,118.5 L536.0,118.5 L536.0,118.5 L537.0,118.5 L537.0,117.5 L538.0,117.5 L538.0,117.5 L539.0,117.5 L539.0,118.5 L540.0,118.5 L540.0,118.5 L541.0,118.5 L541.0,118.5 L542.0,118.5 L542.0,118.5 L543.0,118.5 L543.0,118.5 L544.0,118.5 L544.0,116.5 L545.0,116.5 L545.0,118.5 L546.0,118.5 L546.0,118.5 L547.0,118.5 L547.0,119.5 L548.0,119.5 L548.0,118.5 L549.0,118.5 L549.0,118.5 L550.0,118.5 L550.0,118.5 L551.0,118.5 L551.0,118.5 L552.0,118.5 L552.0,117.5 L553.0,117.5 L553.0,118.5 L554.0,118.5 L554.0,118.5 L555.0,118.5 L555.0,118.5 L556.0,118.5 L556.0,118.5 L557.0,118.5 L557.0,118.5 L558.0,118.5 L558.0,118.5 L559.0,118.5 L559.0,118.5 L560.0,118.5 L560.0,118.5 L561.0,118.5 L561.0,118.5 L562.0,118.5 L562.0,119.5 L563.0,119.5 L563.0,118.5 L564.0,118.5 L564.0,118.5 L565.0,118.5 L565.0,119.5 L566.0,119.5 L566.0,118.5 L567.0,118.5 L567.0,118.5 L568.0,118.5 L568.0,118.5 L569.0,118.5 L569.0,118.5 L570.0,118.5 L570.0,118.5 L571.0,118.5 L571.0,118.5 L572.0,118.5 L572.0,118.5 L573.0,118.5 L573.0,117.5 L574.0,117.5 L574.0,117.5 L575.0,117.5 L575.0,118.5 L576.0,118.5 L576.0,118.5 L577.0,118.5 L577.0,118.5 L578.0,118.5 L578.0,119.5 L579.0,119.5 L579.0,118.5 L580.0,118.5 L580.0,118.5 L581.0,118.5 L581.0,118.5 L582.0,118.5 L582.0,117.5 L583.0,117.5 L583.0,118.5 L584.0,118.5 L584.0,118.5 L585.0,118.5 L585.0,119.5 L586.0,119.5 L586.0,118.5 L587.0,118.5 L587.0,118.5 L588.0,118.5 L588.0,118.5 L589.0,118.5 L589.0,118.5 L590.0,118.5 L590.0,118.5 L591.0,118.5 L591.0,118.5 L592.0,118.5 L592.0,118.5 L593.0,118.5 L593.0,118.5 L594.0,118.5 L594.0,118.5 L595.0,118.5 L595.0,118.5 L596.0,118.5 L596.0,118.5 L597.0,118.5 L597.0,117.5 L598.0,117.5 L598.0,119.5 L599.0,119.5 L599.0,118.5 L600.0,118.5 L600.0,118.5 L601.0,118.5 L601.0,118.5 L602.0,118.5 L602.0,118.5 L603.0,118.5 L603.0,118.5 L604.0,118.5 L604.0,118.5 L605.0,118.5 L605.0,118.5 L606.0,118.5 L606.0,118.5 L607.0,118.5 L607.0,118.5 L608.0,118.5 L608.0,118.5 L609.0,118.5 L609.0,118.5 L610.0,118.5 L610.0,118.5 L611.0,118.5 L611.0,118.5 L612.0,118.5 L612.0,118.5 L613.0,118.5 L613.0,118.5 L614.0,118.5 L614.0,118.5 L615.0,118.5 L615.0,117.5 L616.0,117.5 L616.0,118.5 L617.0,118.5 L617.0,118.5 L618.0,118.5 L618.0,118.5 L619.0,118.5 L619.0,118.5 L620.0,118.5 L620.0,118.5 L621.0,118.5 L621.0,117.5 L622.0,117.5 L622.0,118.5 L623.0,118.5 L623.0,119.5 L624.0,119.5 L624.0,118.5 L625.0,118.5 L625.0,118.5 L626.0,118.5 L626.0,118.5 L627.0,118.5 L627.0,118.5 L628.0,118.5 L628.0,118.5 L629.0,118.5 L629.0,118.5 L630.0,118.5 L630.0,118.5 L631.0,118.5 L631.0,118.5 L632.0,118.5 L632.0,118.5 L633.0,118.5 L633.0,118.5 L634.0,118.5 L634.0,118.5 L635.0,118.5 L635.0,118.5 L636.0,118.5 L636.0,118.5 L637.0,118.5 L637.0,118.5 L638.0,118.5 L638.0,118.5 L639.0,118.5 L639.0,118.5 L640.0,118.5 L640.0,118.5 L641.0,118.5 L641.0,118.5 L642.0,118.5 L642.0,118.5 L643.0,118.5 L643.0,119.5 L644.0,119.5 L644.0,118.5 L645.0,118.5 L645.0,119.5 L646.0,119.5 L646.0,118.5 L647.0,118.5 L647.0,119.5 L648.0,119.5 L648.0,118.5 L649.0,118.5 L649.0,118.5 L650.0,118.5 L650.0,118.5 L651.0,118.5 L651.0,118.5 L652.0,118.5 L652.0,118.5 L653.0,118.5 L653.0,118.5 L654.0,118.5 L654.0,118.5 L655.0,118.5 L655.0,118.5 L656.0,118.5 L656.0,118.5 L657.0,118.5 L657.0,118.5 L658.0,118.5 L658.0,117.5 L659.0,117.5 L659.0,118.5 L660.0,118.5 L660.0,118.5 L661.0,118.5 L661.0,119.5 L662.0,119.5 L662.0,118.5 L663.0,118.5 L663.0,118.5 L664.0,118.5 L664.0,118.5 L665.0,118.5 L665.0,118.5 L666.0,118.5 L666.0,118.5 L667.0,118.5 L667.0,118.5 L668.0,118.5 L668.0,118.5 L669.0,118.5 L669.0,118.5 L670.0,118.5 L670.0,118.5 L671.0,118.5 L671.0,118.5 L672.0,118.5 L672.0,118.5 L673.0,118.5 L673.0,117.5 L674.0,117.5 L674.0,117.5 L675.0,117.5 L675.0,118.5 L676.0,118.5 L676.0,118.5 L677.0,118.5 L677.0,118.5 L678.0,118.5 L678.0,124.5 L679.0,124.5 L679.0,117.5 L680.0,117.5 L680.0,118.5 L681.0,118.5 L681.0,118.5 L682.0,118.5 L682.0,118.5 L683.0,118.5 L683.0,118.5 L684.0,118.5 L684.0,118.5 L685.0,118.5 L685.0,118.5 L686.0,118.5 L686.0,119.5 L687.0,119.5 L687.0,118.5 L688.0,118.5 L688.0,118.5 L689.0,118.5 L689.0,118.5 L690.0,118.5 L690.0,118.5 L691.0,118.5 L691.0,118.5 L692.0,118.5 L692.0,118.5 L693.0,118.5 L693.0,118.5 L694.0,118.5 L694.0,118.5 L695.0,118.5 L695.0,118.5 L696.0,118.5 L696.0,117.5 L697.0,117.5 L697.0,118.5 L698.0,118.5 L698.0,118.5 L699.0,118.5" fill="none" stroke="#383838" stroke-width="1" shape-rendering="crispEdges" stroke-opacity="0.75"/>
<line x1="77.25" y1="184.67" x2="77.25" y2="187.07" stroke="#9a9a9a"/>
<line x1="77.25" y1="267.92" x2="77.25" y2="270.32" stroke="#9a9a9a"/>
<line x1="120.50" y1="184.67" x2="120.50" y2="187.07" stroke="#9a9a9a"/>
<line x1="120.50" y1="267.92" x2="120.50" y2="270.32" stroke="#9a9a9a"/>
<line x1="163.75" y1="184.67" x2="163.75" y2="187.07" stroke="#9a9a9a"/>
<line x1="163.75" y1="267.92" x2="163.75" y2="270.32" stroke="#9a9a9a"/>
<line x1="207.00" y1="184.67" x2="207.00" y2="187.07" stroke="#9a9a9a"/>
<line x1="207.00" y1="267.92" x2="207.00" y2="270.32" stroke="#9a9a9a"/>
<line x1="250.25" y1="184.67" x2="250.25" y2="187.07" stroke="#9a9a9a"/>
<line x1="250.25" y1="267.92" x2="250.25" y2="270.32" stroke="#9a9a9a"/>
<line x1="293.50" y1="184.67" x2="293.50" y2="187.07" stroke="#9a9a9a"/>
<line x1="293.50" y1="267.92" x2="293.50" y2="270.32" stroke="#9a9a9a"/>
<line x1="336.75" y1="184.67" x2="336.75" y2="187.07" stroke="#9a9a9a"/>
<line x1="336.75" y1="267.92" x2="336.75" y2="270.32" stroke="#9a9a9a"/>
<line x1="380.00" y1="184.67" x2="380.00" y2="187.07" stroke="#9a9a9a"/>
<line x1="380.00" y1="267.92" x2="380.00" y2="270.32" stroke="#9a9a9a"/>
<line x1="423.25" y1="184.67" x2="423.25" y2="187.07" stroke="#9a9a9a"/>
<line x1="423.25" y1="267.92" x2="423.25" y2="270.32" stroke="#9a9a9a"/>
<line x1="466.50" y1="184.67" x2="466.50" y2="187.07" stroke="#9a9a9a"/>
<line x1="466.50" y1="267.92" x2="466.50" y2="270.32" stroke="#9a9a9a"/>
<line x1="509.75" y1="184.67" x2="509.75" y2="187.07" stroke="#9a9a9a"/>
<line x1="509.75" y1="267.92" x2="509.75" y2="270.32" stroke="#9a9a9a"/>
<line x1="553.00" y1="184.67" x2="553.00" y2="187.07" stroke="#9a9a9a"/>
<line x1="553.00" y1="267.92" x2="553.00" y2="270.32" stroke="#9a9a9a"/>
<line x1="596.25" y1="184.67" x2="596.25" y2="187.07" stroke="#9a9a9a"/>
<line x1="596.25" y1="267.92" x2="596.25" y2="270.32" stroke="#9a9a9a"/>
<line x1="639.50" y1="184.67" x2="639.50" y2="187.07" stroke="#9a9a9a"/>
<line x1="639.50" y1="267.92" x2="639.50" y2="270.32" stroke="#9a9a9a"/>
<line x1="682.75" y1="184.67" x2="682.75" y2="187.07" stroke="#9a9a9a"/>
<line x1="682.75" y1="267.92" x2="682.75" y2="270.32" stroke="#9a9a9a"/>
<line x1="34" y1="201.5" x2="38.5" y2="201.5" stroke="#555"/>
<line x1="698" y1="201.5" x2="702" y2="201.5" stroke="#666"/>
<line x1="34" y1="219.5" x2="38.5" y2="219.5" stroke="#555"/>
<line x1="698" y1="219.5" x2="702" y2="219.5" stroke="#666"/>
<line x1="34" y1="236.5" x2="38.5" y2="236.5" stroke="#555"/>
<line x1="698" y1="236.5" x2="702" y2="236.5" stroke="#666"/>
<line x1="34" y1="253.5" x2="46.5" y2="253.5" stroke="#a8a8a8"/>
<line x1="48" y1="253.5" x2="690" y2="253.5" stroke="#b4b4b4" stroke-dasharray="2,3"/>
<line x1="690" y1="253.5" x2="702" y2="253.5" stroke="#b0b0b0"/>
<line x1="38.5" y1="185.1" x2="38.5" y2="269.9" stroke="#b8485a" stroke-dasharray="3,2.5"/>
<line x1="698.5" y1="185.1" x2="698.5" y2="269.9" stroke="#222" stroke-dasharray="3,2"/>
<path d="M34.0,204.0 L35.0,203.8 L36.1,203.6 L37.1,201.3 L38.2,201.4 L39.2,203.8 L40.3,203.8 L41.3,201.3 L42.4,201.2 L43.4,203.7 L44.5,203.7 L45.5,201.4 L46.6,201.3 L47.6,203.8 L48.7,203.4 L49.7,201.4 L50.8,201.5 L51.8,204.0 L52.9,203.8 L53.9,201.7 L55.0,201.5 L56.0,203.5 L57.1,203.5 L58.1,201.8 L59.2,201.6 L60.2,203.6 L61.3,203.4 L62.3,201.5 L63.4,201.6 L64.4,203.7 L65.5,203.6 L66.5,201.6 L67.6,201.8 L68.6,203.5 L69.7,203.4 L70.7,201.4 L71.8,201.5 L72.8,203.8 L73.9,203.5 L74.9,201.7 L76.0,201.6 L77.0,203.7 L78.1,203.5 L79.1,201.8 L80.2,201.4 L81.2,203.9 L82.3,203.5 L83.3,201.3 L84.4,201.7 L85.4,203.6 L86.5,204.0 L87.5,201.5 L88.6,201.3 L89.6,203.5 L90.7,203.7 L91.7,201.6 L92.8,201.8 L93.8,203.5 L94.9,203.6 L95.9,201.3 L97.0,201.8 L98.0,203.5 L99.1,203.4 L100.1,201.2 L101.2,201.4 L102.2,203.9 L103.3,203.9 L104.3,201.6 L105.4,201.8 L106.4,204.0 L107.5,203.6 L108.5,201.3 L109.6,201.8 L110.6,203.8 L111.7,203.4 L112.7,201.6 L113.8,201.4 L114.8,203.6 L115.9,203.6 L116.9,201.3 L118.0,201.2 L119.0,203.6 L120.1,203.6 L121.1,201.8 L122.2,201.3 L123.2,204.0 L124.3,203.5 L125.3,201.4 L126.4,201.7 L127.4,203.9 L128.5,203.7 L129.5,201.2 L130.6,201.5 L131.6,203.6 L132.7,204.0 L133.7,201.3 L134.8,201.4 L135.8,203.9 L136.9,203.4 L137.9,201.4 L139.0,201.7 L140.0,203.9 L141.1,203.4 L142.1,201.2 L143.2,201.2 L144.2,204.0 L145.3,203.6 L146.3,201.6 L147.4,201.7 L148.4,203.6 L149.5,203.6 L150.5,201.8 L151.6,201.6 L152.7,203.6 L153.7,201.6 L154.8,201.4 L155.8,203.6 L156.9,203.4 L157.9,201.7 L159.0,201.7 L160.0,203.8 L161.1,204.0 L162.1,201.2 L163.2,201.3 L164.2,203.7 L165.3,204.0 L166.3,201.8 L167.4,201.4 L168.4,203.6 L169.5,203.7 L170.5,201.5 L171.6,201.8 L172.6,203.5 L173.7,203.9 L174.7,201.6 L175.8,201.7 L176.8,203.9 L177.9,203.8 L178.9,201.4 L180.0,201.4 L181.0,203.6 L182.1,203.9 L183.1,201.2 L184.2,201.3 L185.2,203.9 L186.3,203.5 L187.3,201.2 L188.4,201.2 L189.4,203.7 L190.5,203.6 L191.5,201.8 L192.6,201.7 L193.6,204.0 L194.7,203.6 L195.7,201.3 L196.8,201.3 L197.8,203.7 L198.9,203.8 L199.9,201.5 L201.0,201.3 L202.0,203.7 L203.1,203.8 L204.1,201.6 L205.2,201.6 L206.2,203.9 L207.3,203.8 L208.3,201.3 L209.4,201.7 L210.4,203.6 L211.5,203.7 L212.5,201.4 L213.6,201.6 L214.6,203.5 L215.7,203.5 L216.7,201.3 L217.8,201.3 L218.8,203.9 L219.9,203.7 L220.9,201.4 L222.0,201.4 L223.0,204.0 L224.1,203.7 L225.1,201.3 L226.2,201.7 L227.2,203.8 L228.3,204.0 L229.3,201.3 L230.4,201.5 L231.4,203.9 L232.5,203.9 L233.5,201.7 L234.6,201.2 L235.6,203.6 L236.7,203.5 L237.7,201.3 L238.8,201.8 L239.8,203.7 L240.9,204.0 L241.9,201.4 L243.0,201.7 L244.0,203.7 L245.1,203.6 L246.1,201.7 L247.2,201.8 L248.2,203.5 L249.3,203.8 L250.3,201.6 L251.4,201.3 L252.4,203.6 L253.5,203.5 L254.5,201.3 L255.6,201.4 L256.6,203.8 L257.7,203.8 L258.7,201.3 L259.8,201.2 L260.8,203.6 L261.9,203.8 L262.9,201.3 L264.0,201.4 L265.0,203.5 L266.1,203.9 L267.1,201.5 L268.2,201.2 L269.2,203.5 L270.3,203.6 L271.3,201.5 L272.4,201.6 L273.4,203.5 L274.5,203.5 L275.5,201.6 L276.6,201.4 L277.6,203.6 L278.7,203.6 L279.7,201.8 L280.8,201.4 L281.8,203.7 L282.9,203.6 L283.9,201.4 L285.0,201.7 L286.0,204.0 L287.1,203.6 L288.1,201.3 L289.2,201.6 L290.2,203.5 L291.3,203.4 L292.3,201.7 L293.4,201.5 L294.4,203.9 L295.5,203.6 L296.5,201.7 L297.6,201.5 L298.6,203.5 L299.7,203.4 L300.7,201.5 L301.8,201.6 L302.8,203.9 L303.9,203.5 L304.9,201.6 L306.0,201.4 L307.0,203.7 L308.1,203.5 L309.1,201.4 L310.2,201.5 L311.2,204.0 L312.3,203.5 L313.3,201.5 L314.4,201.7 L315.4,204.0 L316.5,203.5 L317.5,201.3 L318.6,201.8 L319.6,204.0 L320.7,203.7 L321.7,201.2 L322.8,201.8 L323.8,203.6 L324.9,203.9 L325.9,201.6 L327.0,201.7 L328.0,203.5 L329.1,203.9 L330.1,201.3 L331.2,201.4 L332.2,203.9 L333.3,203.9 L334.3,201.3 L335.4,201.3 L336.4,203.6 L337.5,203.7 L338.5,201.4 L339.6,201.3 L340.6,203.5 L341.7,203.8 L342.7,201.7 L343.8,201.2 L344.8,203.7 L345.9,203.9 L346.9,201.2 L348.0,201.7 L349.0,203.5 L350.1,203.8 L351.1,201.5 L352.2,201.6 L353.2,203.6 L354.3,203.7 L355.3,201.5 L356.4,201.5 L357.4,203.8 L358.5,203.7 L359.5,201.5 L360.6,201.2 L361.6,203.8 L362.7,203.7 L363.7,201.3 L364.8,201.7 L365.8,203.9 L366.9,203.7 L367.9,201.3 L369.0,201.5 L370.0,203.5 L371.1,203.5 L372.1,201.5 L373.2,201.3 L374.2,203.7 L375.3,203.7 L376.3,201.2 L377.4,201.6 L378.4,203.4 L379.5,203.8 L380.5,201.7 L381.6,201.5 L382.6,203.4 L383.7,203.7 L384.7,201.4 L385.8,201.8 L386.8,203.5 L387.9,203.9 L388.9,201.8 L390.0,201.6 L391.0,203.9 L392.1,203.5 L393.1,201.8 L394.2,201.5 L395.2,204.0 L396.3,203.9 L397.3,201.3 L398.4,201.7 L399.4,204.0 L400.5,203.4 L401.5,201.4 L402.6,201.7 L403.6,203.5 L404.7,203.9 L405.7,201.4 L406.8,201.7 L407.8,203.5 L408.9,203.7 L409.9,201.8 L411.0,201.3 L412.0,203.6 L413.1,203.7 L414.1,201.4 L415.2,201.2 L416.2,203.5 L417.3,203.5 L418.3,201.8 L419.4,201.6 L420.4,203.9 L421.5,203.5 L422.5,201.7 L423.6,201.3 L424.6,203.7 L425.7,203.8 L426.7,201.4 L427.8,201.7 L428.8,203.7 L429.9,203.7 L430.9,201.7 L432.0,201.3 L433.0,204.0 L434.1,203.8 L435.1,201.4 L436.2,201.7 L437.2,203.6 L438.3,204.0 L439.3,201.5 L440.4,201.4 L441.4,203.9 L442.5,203.7 L443.5,201.3 L444.6,201.6 L445.6,203.4 L446.7,203.9 L447.7,201.4 L448.8,201.6 L449.8,204.0 L450.9,203.8 L451.9,201.6 L453.0,201.4 L454.0,203.4 L455.1,203.4 L456.1,201.3 L457.2,201.6 L458.2,203.7 L459.3,203.7 L460.3,201.7 L461.4,201.3 L462.4,203.5 L463.5,203.8 L464.5,201.2 L465.6,201.2 L466.6,203.6 L467.7,203.5 L468.7,201.4 L469.8,201.3 L470.8,203.8 L471.9,203.8 L472.9,201.3 L474.0,201.6 L475.0,203.7 L476.1,203.5 L477.1,201.8 L478.2,201.3 L479.2,203.5 L480.3,203.5 L481.3,201.6 L482.4,201.7 L483.4,203.9 L484.5,203.6 L485.5,201.4 L486.6,201.2 L487.6,203.8 L488.7,203.7 L489.7,201.4 L490.8,201.6 L491.8,203.7 L492.9,204.0 L493.9,201.6 L495.0,201.3 L496.0,203.9 L497.1,198.3 L498.1,201.5 L499.2,201.4 L500.2,203.5 L501.3,203.4 L502.3,201.7 L503.4,201.2 L504.4,203.7 L505.5,204.0 L506.5,201.3 L507.6,201.3 L508.6,203.8 L509.7,203.7 L510.7,201.6 L511.8,201.7 L512.8,203.5 L513.9,203.6 L514.9,201.4 L516.0,201.2 L517.0,203.9 L518.1,203.9 L519.1,201.6 L520.2,201.2 L521.2,203.9 L522.3,203.8 L523.3,201.5 L524.4,201.6 L525.4,203.7 L526.5,203.5 L527.5,201.3 L528.6,201.3 L529.6,203.4 L530.7,203.6 L531.7,201.6 L532.8,201.6 L533.8,203.9 L534.9,203.8 L535.9,201.4 L537.0,201.5 L538.0,203.7 L539.1,203.9 L540.1,201.5 L541.2,201.4 L542.2,203.8 L543.3,204.0 L544.3,201.3 L545.4,199.0 L546.4,203.4 L547.5,203.6 L548.5,201.3 L549.6,201.6 L550.6,204.0 L551.7,203.8 L552.7,201.4 L553.8,201.7 L554.8,203.6 L555.9,203.5 L556.9,201.7 L558.0,201.6 L559.0,203.8 L560.1,203.8 L561.1,201.8 L562.2,201.5 L563.2,203.9 L564.3,203.8 L565.3,201.7 L566.4,201.5 L567.4,203.8 L568.5,203.7 L569.5,201.4 L570.6,201.3 L571.6,203.8 L572.7,203.4 L573.7,201.7 L574.8,201.3 L575.8,203.4 L576.9,203.5 L577.9,201.8 L579.0,201.4 L580.0,203.5 L581.1,203.4 L582.1,201.2 L583.2,201.6 L584.2,203.8 L585.3,203.8 L586.3,201.6 L587.4,201.2 L588.4,203.8 L589.5,203.6 L590.5,201.7 L591.6,201.7 L592.6,203.9 L593.7,203.4 L594.7,201.7 L595.8,201.7 L596.8,204.0 L597.9,203.5 L598.9,201.3 L600.0,201.3 L601.0,203.4 L602.0,203.9 L603.1,203.9 L604.1,201.6 L605.2,201.7 L606.2,203.8 L607.3,203.6 L608.3,201.3 L609.4,201.3 L610.4,203.9 L611.5,203.5 L612.5,201.4 L613.6,201.5 L614.6,203.4 L615.7,203.6 L616.7,201.4 L617.8,201.6 L618.8,203.6 L619.9,203.6 L620.9,201.8 L622.0,201.5 L623.0,203.9 L624.1,203.8 L625.1,201.2 L626.2,201.4 L627.2,203.7 L628.3,203.9 L629.3,201.4 L630.4,201.6 L631.4,203.7 L632.5,203.5 L633.5,201.7 L634.6,201.3 L635.6,203.9 L636.7,203.5 L637.7,201.2 L638.8,201.3 L639.8,203.9 L640.9,204.0 L641.9,201.2 L643.0,201.5 L644.0,203.7 L645.1,203.9 L646.1,201.3 L647.2,201.5 L648.2,203.6 L649.3,203.9 L650.3,201.4 L651.4,201.8 L652.4,203.6 L653.5,203.5 L654.5,201.6 L655.6,201.5 L656.6,203.5 L657.7,203.8 L658.7,201.2 L659.8,201.7 L660.8,203.8 L661.9,203.9 L662.9,201.6 L664.0,201.4 L665.0,203.6 L666.1,203.6 L667.1,201.7 L668.2,201.3 L669.2,203.9 L670.3,203.4 L671.3,201.3 L672.4,201.4 L673.4,203.9 L674.5,203.7 L675.5,201.4 L676.6,201.7 L677.6,207.5 L678.7,203.7 L679.7,201.5 L680.8,201.7 L681.8,203.9 L682.9,203.8 L683.9,201.4 L685.0,201.4 L686.0,203.5 L687.1,203.9 L688.1,201.6 L689.2,201.6 L690.2,203.5 L691.3,203.7 L692.3,201.7 L693.4,201.5 L694.4,203.5 L695.5,203.7 L696.5,201.7 L697.6,201.3 L698.0,202.5" fill="none" stroke="#383838" stroke-width="0.9"/>
<line x1="77.25" y1="276.34" x2="77.25" y2="278.74" stroke="#9a9a9a"/>
<line x1="77.25" y1="359.59" x2="77.25" y2="361.99" stroke="#9a9a9a"/>
<line x1="120.50" y1="276.34" x2="120.50" y2="278.74" stroke="#9a9a9a"/>
<line x1="120.50" y1="359.59" x2="120.50" y2="361.99" stroke="#9a9a9a"/>
<line x1="163.75" y1="276.34" x2="163.75" y2="278.74" stroke="#9a9a9a"/>
<line x1="163.75" y1="359.59" x2="163.75" y2="361.99" stroke="#9a9a9a"/>
<line x1="207.00" y1="276.34" x2="207.00" y2="278.74" stroke="#9a9a9a"/>
<line x1="207.00" y1="359.59" x2="207.00" y2="361.99" stroke="#9a9a9a"/>
<line x1="250.25" y1="276.34" x2="250.25" y2="278.74" stroke="#9a9a9a"/>
<line x1="250.25" y1="359.59" x2="250.25" y2="361.99" stroke="#9a9a9a"/>
<line x1="293.50" y1="276.34" x2="293.50" y2="278.74" stroke="#9a9a9a"/>
<line x1="293.50" y1="359.59" x2="293.50" y2="361.99" stroke="#9a9a9a"/>
<line x1="336.75" y1="276.34" x2="336.75" y2="278.74" stroke="#9a9a9a"/>
<line x1="336.75" y1="359.59" x2="336.75" y2="361.99" stroke="#9a9a9a"/>
<line x1="380.00" y1="276.34" x2="380.00" y2="278.74" stroke="#9a9a9a"/>
<line x1="380.00" y1="359.59" x2="380.00" y2="361.99" stroke="#9a9a9a"/>
<line x1="423.25" y1="276.34" x2="423.25" y2="278.74" stroke="#9a9a9a"/>
<line x1="423.25" y1="359.59" x2="423.25" y2="361.99" stroke="#9a9a9a"/>
<line x1="466.50" y1="276.34" x2="466.50" y2="278.74" stroke="#9a9a9a"/>
<line x1="466.50" y1="359.59" x2="466.50" y2="361.99" stroke="#9a9a9a"/>
<line x1="509.75" y1="276.34" x2="509.75" y2="278.74" stroke="#9a9a9a"/>
<line x1="509.75" y1="359.59" x2="509.75" y2="361.99" stroke="#9a9a9a"/>
<line x1="553.00" y1="276.34" x2="553.00" y2="278.74" stroke="#9a9a9a"/>
<line x1="553.00" y1="359.59" x2="553.00" y2="361.99" stroke="#9a9a9a"/>
<line x1="596.25" y1="276.34" x2="596.25" y2="278.74" stroke="#9a9a9a"/>
<line x1="596.25" y1="359.59" x2="596.25" y2="361.99" stroke="#9a9a9a"/>
<line x1="639.50" y1="276.34" x2="639.50" y2="278.74" stroke="#9a9a9a"/>
<line x1="639.50" y1="359.59" x2="639.50" y2="361.99" stroke="#9a9a9a"/>
<line x1="682.75" y1="276.34" x2="682.75" y2="278.74" stroke="#9a9a9a"/>
<line x1="682.75" y1="359.59" x2="682.75" y2="361.99" stroke="#9a9a9a"/>
<line x1="34" y1="293.5" x2="38.5" y2="293.5" stroke="#555"/>
<line x1="698" y1="293.5" x2="702" y2="293.5" stroke="#666"/>
<line x1="34" y1="310.5" x2="38.5" y2="310.5" stroke="#555"/>
<line x1="698" y1="310.5" x2="702" y2="310.5" stroke="#666"/>
<line x1="34" y1="328.5" x2="38.5" y2="328.5" stroke="#555"/>
<line x1="698" y1="328.5" x2="702" y2="328.5" stroke="#666"/>
<line x1="34" y1="345.5" x2="46.5" y2="345.5" stroke="#a8a8a8"/>
<line x1="48" y1="345.5" x2="690" y2="345.5" stroke="#b4b4b4" stroke-dasharray="2,3"/>
<line x1="690" y1="345.5" x2="702" y2="345.5" stroke="#b0b0b0"/>
<line x1="38.5" y1="276.7" x2="38.5" y2="361.6" stroke="#b8485a" stroke-dasharray="3,2.5"/>
<line x1="698.5" y1="276.7" x2="698.5" y2="361.6" stroke="#222" stroke-dasharray="3,2"/>
<path d="M34.0,307.5 L36.0,307.5 L38.0,307.5 L40.0,307.5 L42.0,307.5 L44.0,307.5 L46.0,307.5 L48.0,307.5 L50.0,307.5 L52.0,307.5 L54.0,307.5 L56.0,307.5 L58.0,307.5 L60.0,307.5 L62.0,306.5 L64.0,307.5 L66.0,306.5 L68.0,307.5 L70.0,307.5 L72.0,307.5 L74.0,307.5 L76.0,306.5 L78.0,306.5 L80.0,307.5 L82.3,303.5 L84.7,300.5 L87.0,297.5 L89.1,297.5 L91.1,297.5 L93.2,297.5 L95.2,297.5 L97.3,297.5 L99.4,297.5 L101.4,297.5 L103.5,296.5 L105.6,297.5 L107.6,297.5 L109.7,297.5 L111.8,297.5 L113.8,297.5 L115.9,297.5 L117.9,297.5 L120.0,296.5 L122.1,296.5 L124.1,297.5 L126.2,297.5 L128.3,297.5 L130.4,297.5 L132.4,297.5 L134.5,297.5 L136.6,297.5 L138.6,297.5 L140.7,297.5 L142.8,297.5 L144.9,297.5 L146.9,297.5 L149.0,297.5 L151.3,300.5 L153.7,303.5 L156.0,305.5 L158.0,305.5 L160.1,306.5 L162.1,306.5 L164.1,306.5 L166.2,306.5 L168.2,306.5 L170.2,306.5 L172.3,306.5 L174.3,306.5 L176.3,306.5 L178.3,306.5 L180.4,306.5 L182.4,306.5 L184.4,306.5 L186.5,306.5 L188.5,306.5 L190.5,306.5 L192.6,306.5 L194.6,306.5 L196.6,306.5 L198.7,306.5 L200.7,306.5 L202.8,303.5 L204.9,301.5 L207.0,298.5 L209.0,297.5 L211.0,297.5 L213.0,298.5 L215.0,297.5 L217.0,298.5 L219.0,297.5 L221.0,298.5 L223.0,297.5 L225.0,298.5 L227.0,297.5 L229.0,297.5 L231.0,297.5 L233.0,297.5 L235.0,297.5 L237.0,297.5 L239.0,297.5 L241.0,297.5 L243.0,297.5 L245.0,297.5 L247.0,297.5 L249.0,297.5 L251.0,297.5 L253.0,297.5 L255.0,301.5 L257.0,306.5 L259.0,306.5 L261.0,306.5 L263.0,306.5 L265.0,306.5 L267.0,307.5 L269.0,307.5 L271.0,307.5 L273.0,307.5 L275.0,307.5 L277.0,308.5 L279.0,307.5 L281.0,308.5 L283.0,308.5 L285.0,308.5 L287.0,308.5 L289.0,307.5 L291.0,307.5 L293.0,307.5 L295.0,307.5 L297.0,307.5 L299.0,307.5 L301.0,306.5 L303.0,306.5 L305.0,306.5 L307.0,306.5 L310.4,304.5 L312.4,301.5 L314.4,299.5 L316.4,296.5 L318.4,296.5 L320.5,296.5 L322.5,297.5 L324.6,297.5 L326.6,297.5 L328.7,297.5 L330.7,297.5 L332.8,297.5 L334.8,297.5 L336.9,296.5 L338.9,297.5 L340.9,297.5 L343.0,297.5 L345.0,296.5 L347.1,297.5 L349.1,297.5 L351.2,296.5 L353.2,296.5 L355.3,297.5 L357.3,297.5 L359.4,297.5 L361.4,297.5 L363.5,297.5 L365.5,297.5 L367.9,300.5 L370.2,303.5 L372.6,305.5 L374.6,306.5 L376.7,306.5 L378.7,305.5 L380.8,306.5 L382.8,306.5 L384.9,306.5 L386.9,306.5 L389.0,306.5 L391.0,306.5 L393.1,306.5 L395.1,306.5 L397.2,306.5 L399.2,306.5 L401.3,306.5 L403.3,306.5 L405.4,306.5 L407.4,306.5 L409.5,306.5 L411.5,306.5 L413.6,306.5 L415.6,306.5 L418.0,303.5 L420.3,300.5 L422.7,297.5 L424.7,297.5 L426.7,297.5 L428.8,297.5 L430.8,297.5 L432.8,297.5 L434.8,297.5 L436.8,297.5 L438.8,297.5 L440.9,297.5 L442.9,297.5 L444.9,297.5 L446.9,297.5 L448.9,297.5 L450.9,297.5 L452.9,297.5 L455.0,297.5 L457.0,297.5 L459.0,297.5 L459.5,294.5 L460.0,297.5 L462.1,297.5 L464.3,297.5 L466.4,297.5 L468.6,297.5 L470.7,297.5 L472.9,297.5 L475.0,297.5 L477.5,301.5 L480.0,305.5 L482.0,306.5 L484.0,306.5 L486.0,306.5 L488.0,306.5 L490.0,306.5 L492.0,306.5 L494.0,306.5 L496.0,306.5 L498.0,306.5 L500.0,307.5 L502.0,306.5 L504.0,307.5 L506.0,306.5 L508.0,307.5 L510.0,306.5 L512.0,307.5 L514.0,307.5 L516.0,307.5 L518.0,307.5 L520.0,307.5 L522.1,307.5 L524.2,307.5 L526.4,307.5 L528.5,307.5 L530.6,307.5 L532.8,307.5 L534.9,307.5 L537.0,307.5 L539.1,303.5 L541.3,299.5 L543.4,296.5 L544.0,293.5 L545.0,296.5 L547.0,297.5 L549.1,296.5 L551.1,296.5 L553.2,296.5 L555.2,297.5 L557.3,296.5 L559.4,296.5 L561.4,296.5 L563.5,296.5 L565.5,296.5 L567.5,297.5 L569.6,296.5 L571.6,297.5 L573.7,296.5 L575.8,297.5 L577.8,296.5 L579.9,296.5 L581.9,296.5 L584.0,297.5 L586.0,297.5 L588.0,301.5 L590.0,305.5 L592.6,303.5 L595.2,302.5 L597.8,303.5 L600.4,305.5 L602.4,305.5 L604.4,306.5 L606.4,306.5 L608.5,306.5 L610.5,306.5 L612.5,306.5 L614.5,305.5 L616.5,306.5 L618.5,306.5 L620.5,306.5 L622.6,306.5 L624.6,306.5 L626.6,306.5 L628.6,306.5 L630.6,306.5 L632.6,306.5 L634.7,306.5 L636.7,307.5 L638.7,307.5 L640.7,306.5 L644.5,296.5 L646.5,296.5 L648.5,297.5 L650.5,296.5 L652.5,296.5 L654.5,296.5 L656.5,296.5 L658.5,297.5 L660.5,296.5 L662.5,297.5 L664.5,296.5 L666.5,297.5 L668.5,296.5 L670.5,296.5 L672.5,297.5 L674.5,296.5 L676.5,297.5 L677.0,305.5 L677.5,296.5 L679.7,297.5 L681.9,297.5 L684.1,297.5 L686.2,297.5 L688.4,296.5 L690.6,297.5 L692.8,297.5 L695.0,297.5 L698.0,305.5" fill="none" stroke="#383838" stroke-width="1"/>
<line x1="77.25" y1="368.01" x2="77.25" y2="370.41" stroke="#9a9a9a"/>
<line x1="77.25" y1="451.26" x2="77.25" y2="453.66" stroke="#9a9a9a"/>
<line x1="120.50" y1="368.01" x2="120.50" y2="370.41" stroke="#9a9a9a"/>
<line x1="120.50" y1="451.26" x2="120.50" y2="453.66" stroke="#9a9a9a"/>
<line x1="163.75" y1="368.01" x2="163.75" y2="370.41" stroke="#9a9a9a"/>
<line x1="163.75" y1="451.26" x2="163.75" y2="453.66" stroke="#9a9a9a"/>
<line x1="207.00" y1="368.01" x2="207.00" y2="370.41" stroke="#9a9a9a"/>
<line x1="207.00" y1="451.26" x2="207.00" y2="453.66" stroke="#9a9a9a"/>
<line x1="250.25" y1="368.01" x2="250.25" y2="370.41" stroke="#9a9a9a"/>
<line x1="250.25" y1="451.26" x2="250.25" y2="453.66" stroke="#9a9a9a"/>
<line x1="293.50" y1="368.01" x2="293.50" y2="370.41" stroke="#9a9a9a"/>
<line x1="293.50" y1="451.26" x2="293.50" y2="453.66" stroke="#9a9a9a"/>
<line x1="336.75" y1="368.01" x2="336.75" y2="370.41" stroke="#9a9a9a"/>
<line x1="336.75" y1="451.26" x2="336.75" y2="453.66" stroke="#9a9a9a"/>
<line x1="380.00" y1="368.01" x2="380.00" y2="370.41" stroke="#9a9a9a"/>
<line x1="380.00" y1="451.26" x2="380.00" y2="453.66" stroke="#9a9a9a"/>
<line x1="423.25" y1="368.01" x2="423.25" y2="370.41" stroke="#9a9a9a"/>
<line x1="423.25" y1="451.26" x2="423.25" y2="453.66" stroke="#9a9a9a"/>
<line x1="466.50" y1="368.01" x2="466.50" y2="370.41" stroke="#9a9a9a"/>
<line x1="466.50" y1="451.26" x2="466.50" y2="453.66" stroke="#9a9a9a"/>
<line x1="509.75" y1="368.01" x2="509.75" y2="370.41" stroke="#9a9a9a"/>
<line x1="509.75" y1="451.26" x2="509.75" y2="453.66" stroke="#9a9a9a"/>
<line x1="553.00" y1="368.01" x2="553.00" y2="370.41" stroke="#9a9a9a"/>
<line x1="553.00" y1="451.26" x2="553.00" y2="453.66" stroke="#9a9a9a"/>
<line x1="596.25" y1="368.01" x2="596.25" y2="370.41" stroke="#9a9a9a"/>
<line x1="596.25" y1="451.26" x2="596.25" y2="453.66" stroke="#9a9a9a"/>
<line x1="639.50" y1="368.01" x2="639.50" y2="370.41" stroke="#9a9a9a"/>
<line x1="639.50" y1="451.26" x2="639.50" y2="453.66" stroke="#9a9a9a"/>
<line x1="682.75" y1="368.01" x2="682.75" y2="370.41" stroke="#9a9a9a"/>
<line x1="682.75" y1="451.26" x2="682.75" y2="453.66" stroke="#9a9a9a"/>
<line x1="34" y1="385.5" x2="38.5" y2="385.5" stroke="#555"/>
<line x1="698" y1="385.5" x2="702" y2="385.5" stroke="#666"/>
<line x1="34" y1="402.5" x2="38.5" y2="402.5" stroke="#555"/>
<line x1="698" y1="402.5" x2="702" y2="402.5" stroke="#666"/>
<line x1="34" y1="419.5" x2="38.5" y2="419.5" stroke="#555"/>
<line x1="698" y1="419.5" x2="702" y2="419.5" stroke="#666"/>
<line x1="34" y1="436.5" x2="46.5" y2="436.5" stroke="#a8a8a8"/>
<line x1="48" y1="436.5" x2="690" y2="436.5" stroke="#b4b4b4" stroke-dasharray="2,3"/>
<line x1="690" y1="436.5" x2="702" y2="436.5" stroke="#b0b0b0"/>
<line x1="38.5" y1="368.4" x2="38.5" y2="453.3" stroke="#b8485a" stroke-dasharray="3,2.5"/>
<line x1="698.5" y1="368.4" x2="698.5" y2="453.3" stroke="#222" stroke-dasharray="3,2"/>
<path d="M34.0,399.5 L36.1,398.5 L38.1,399.5 L40.2,398.5 L42.2,398.5 L44.3,398.5 L46.3,398.5 L48.4,399.5 L50.5,398.5 L52.5,398.5 L54.6,398.5 L56.6,398.5 L58.7,399.5 L60.7,398.5 L62.8,398.5 L64.8,398.5 L66.9,398.5 L69.0,398.5 L71.0,398.5 L73.1,398.5 L75.1,399.5 L77.2,398.5 L79.2,398.5 L81.3,398.5 L84.0,394.5 L86.7,389.5 L88.7,390.5 L90.7,390.5 L92.7,389.5 L94.8,389.5 L96.8,389.5 L98.8,389.5 L100.8,390.5 L102.8,389.5 L104.8,389.5 L106.9,389.5 L108.9,389.5 L110.9,390.5 L112.9,389.5 L114.9,389.5 L116.9,389.5 L119.0,389.5 L121.0,389.5 L123.0,389.5 L125.0,389.5 L127.0,389.5 L129.0,389.5 L131.1,389.5 L133.1,389.5 L135.1,389.5 L137.1,389.5 L139.1,389.5 L141.1,389.5 L143.2,389.5 L145.2,389.5 L147.2,389.5 L149.2,389.5 L151.2,392.5 L153.2,395.5 L155.2,398.5 L157.2,398.5 L159.3,398.5 L161.3,398.5 L163.4,398.5 L165.4,398.5 L167.5,398.5 L169.5,398.5 L171.6,398.5 L173.6,398.5 L175.7,398.5 L177.7,398.5 L179.8,398.5 L181.8,398.5 L183.8,398.5 L185.9,398.5 L187.9,398.5 L190.0,398.5 L192.0,398.5 L194.1,398.5 L196.1,398.5 L198.2,398.5 L200.2,398.5 L202.3,399.5 L204.3,399.5 L206.7,394.5 L209.0,389.5 L211.0,390.5 L213.0,390.5 L215.0,389.5 L217.0,389.5 L219.0,389.5 L221.1,389.5 L223.1,389.5 L225.1,389.5 L227.1,389.5 L229.1,389.5 L231.1,389.5 L233.1,389.5 L235.1,389.5 L237.1,389.5 L239.1,389.5 L241.1,389.5 L243.2,389.5 L245.2,389.5 L247.2,389.5 L249.2,389.5 L251.2,389.5 L253.2,389.5 L256.8,397.5 L258.8,397.5 L260.9,397.5 L262.9,397.5 L265.0,398.5 L267.0,398.5 L269.1,398.5 L271.1,398.5 L273.1,398.5 L275.2,399.5 L277.2,399.5 L279.3,399.5 L281.3,399.5 L283.4,400.5 L285.4,400.5 L287.5,399.5 L289.5,399.5 L291.6,399.5 L293.6,399.5 L295.7,398.5 L297.7,398.5 L299.8,398.5 L301.8,398.5 L303.9,398.5 L305.9,398.5 L308.0,398.5 L310.4,394.5 L312.8,392.5 L315.2,389.5 L317.3,389.5 L319.3,390.5 L321.4,389.5 L323.4,389.5 L325.5,389.5 L327.6,390.5 L329.6,389.5 L331.7,389.5 L333.7,389.5 L335.8,389.5 L337.9,389.5 L339.9,389.5 L342.0,389.5 L344.0,388.5 L346.1,389.5 L348.2,389.5 L350.2,389.5 L352.3,389.5 L354.3,389.5 L356.4,388.5 L358.5,389.5 L360.5,389.5 L362.6,389.5 L364.6,389.5 L366.7,388.5 L369.6,393.5 L372.6,398.5 L374.6,398.5 L376.6,398.5 L378.6,397.5 L380.6,398.5 L382.6,398.5 L384.7,397.5 L386.7,397.5 L388.7,397.5 L390.7,397.5 L392.7,398.5 L394.7,397.5 L396.7,397.5 L398.7,397.5 L400.7,398.5 L402.7,397.5 L404.7,398.5 L406.8,397.5 L408.8,397.5 L410.8,398.5 L412.8,397.5 L414.8,398.5 L416.8,398.5 L419.8,393.5 L422.7,388.5 L424.8,388.5 L426.9,388.5 L429.0,389.5 L431.1,389.5 L433.2,389.5 L435.3,388.5 L437.4,388.5 L439.5,389.5 L441.7,388.5 L443.8,389.5 L445.9,388.5 L448.0,388.5 L450.1,388.5 L452.2,389.5 L454.3,389.5 L456.4,388.5 L458.5,389.5 L459.0,392.5 L459.5,388.5 L461.6,388.5 L463.7,388.5 L465.8,389.5 L467.9,389.5 L470.1,389.5 L472.2,389.5 L474.3,389.5 L476.4,389.5 L480.0,398.5 L482.1,398.5 L484.2,398.5 L486.4,398.5 L488.5,398.5 L490.6,398.5 L492.8,398.5 L494.9,398.5 L497.0,398.5 L497.8,395.5 L498.5,399.5 L500.5,399.5 L502.5,399.5 L504.6,399.5 L506.6,399.5 L508.6,399.5 L510.6,400.5 L512.6,399.5 L514.7,399.5 L516.7,399.5 L518.7,400.5 L520.7,399.5 L522.8,400.5 L524.8,399.5 L526.8,399.5 L528.8,399.5 L530.8,400.5 L532.9,400.5 L534.9,399.5 L536.9,400.5 L539.5,396.5 L542.0,392.5 L544.6,388.5 L546.6,388.5 L548.6,388.5 L550.6,388.5 L552.7,388.5 L554.7,388.5 L556.7,388.5 L558.7,388.5 L560.7,388.5 L562.7,388.5 L564.8,388.5 L566.8,388.5 L568.8,388.5 L570.8,388.5 L572.8,389.5 L574.8,388.5 L576.8,388.5 L578.9,388.5 L580.9,389.5 L582.9,388.5 L584.9,389.5 L587.2,392.5 L589.5,396.5 L592.4,394.5 L595.2,393.5 L597.8,395.5 L600.4,396.5 L603.0,397.5 L605.1,398.5 L607.2,397.5 L609.2,398.5 L611.3,398.5 L613.4,398.5 L615.5,399.5 L617.6,398.5 L619.6,398.5 L621.7,399.5 L623.8,399.5 L625.9,399.5 L628.0,399.5 L630.1,399.5 L632.2,399.5 L634.3,398.5 L636.4,399.5 L638.5,399.5 L640.6,399.5 L642.8,395.5 L644.9,392.5 L647.1,389.5 L649.1,389.5 L651.1,388.5 L653.1,389.5 L655.2,389.5 L657.2,389.5 L659.2,389.5 L661.2,389.5 L663.2,389.5 L665.2,388.5 L667.2,389.5 L669.2,389.5 L671.3,389.5 L673.3,388.5 L675.3,389.5 L677.3,389.5 L677.8,392.5 L678.3,388.5 L680.4,389.5 L682.5,389.5 L684.6,388.5 L686.6,389.5 L688.7,389.5 L690.8,389.5 L692.9,389.5 L695.0,389.5 L698.0,400.5" fill="none" stroke="#383838" stroke-width="1"/>
<rect x="9" y="9" width="694.5" height="1" fill="#353535"/>
<line x1="35" y1="446.5" x2="38.5" y2="453" stroke="#a8344a" stroke-width="1.1"/>
<path d="M9.95 9.5V454.8H702.9V9.5" fill="none" stroke="#3c3c3c" stroke-width="1.6"/>
</svg>
<div style="position:absolute;left:689.8px;top:441.6px;font-size:10.5px;color:#1a1a1a">B</div>
</body></html>
